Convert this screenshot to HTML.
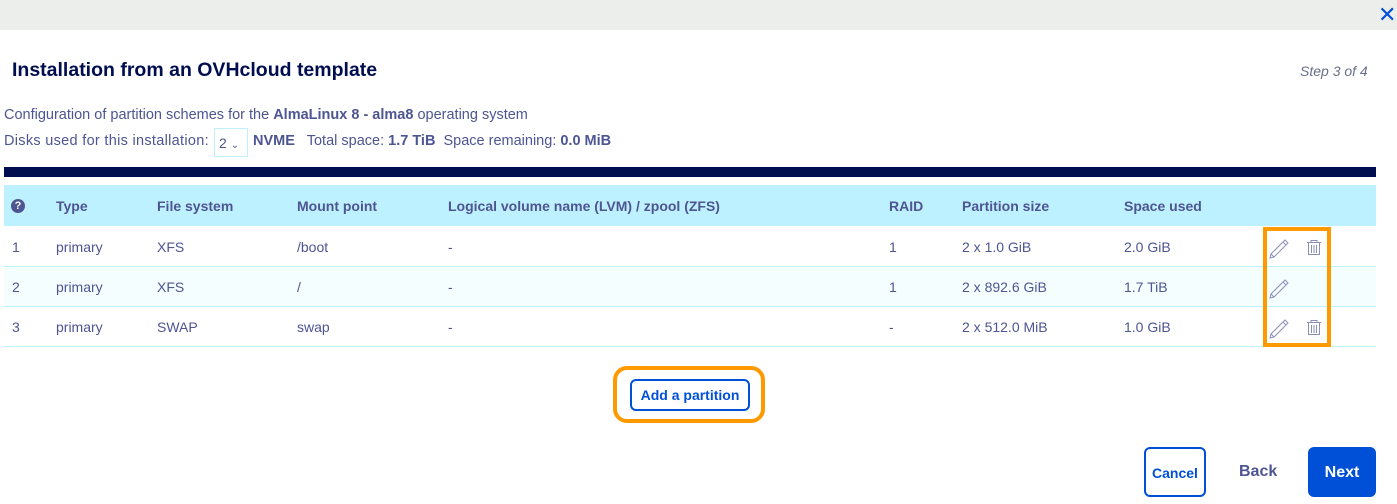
<html><head><style>
body{margin:0;width:1397px;height:504px;overflow:hidden;background:#fff;font-family:"Liberation Sans",sans-serif;color:#4d5592;position:relative}
.a{position:absolute;white-space:nowrap}
b{color:#4d5592}
.th{font-weight:bold;font-size:14px;color:#4d5592}
.td{font-size:14px}
</style></head><body>
<div class="a" style="left:0;top:0;width:1397px;height:30px;background:#eceeec"></div>
<div class="a" style="left:1378px;top:2px;font-size:22px;color:#0050d7">✕</div>
<div class="a" style="left:12px;top:59px;font-size:19.5px;font-weight:bold;color:#000e50">Installation from an OVHcloud template</div>
<div class="a" style="left:1300px;top:63px;font-size:14px;font-style:italic;color:#6a6f8a">Step 3 of 4</div>
<div class="a" style="left:4px;top:107px;font-size:14.5px">Configuration of partition schemes for the <b>AlmaLinux 8 - alma8</b> operating system</div>
<div class="a" style="left:4px;top:133px;font-size:14.5px;letter-spacing:0.3px">Disks used for this installation:</div>
<div class="a" style="left:214px;top:128px;width:34px;height:29px;border:1px solid #bef1ff;box-sizing:border-box;font-size:14px;padding:6px 0 0 4px">2 <span style="font-size:10px">⌄</span></div>
<div class="a" style="left:253px;top:133px;font-size:14.5px"><b>NVME</b>&nbsp;&nbsp; Total space: <b>1.7 TiB</b>&nbsp; Space remaining: <b>0.0 MiB</b></div>
<div class="a" style="left:4px;top:167px;width:1372px;height:10px;background:#000e50"></div>
<div class="a" style="left:4px;top:185px;width:1372px;height:41px;background:#bef1ff"></div>
<div class="a" style="left:4px;top:266px;width:1372px;height:40px;background:#f5feff"></div>
<div class="a" style="left:4px;top:266px;width:1372px;height:1px;background:#bef1ff"></div>
<div class="a" style="left:4px;top:306px;width:1372px;height:1px;background:#bef1ff"></div>
<div class="a" style="left:4px;top:346px;width:1372px;height:1px;background:#bef1ff"></div>
<div class="a" style="left:11px;top:199px;width:14px;height:14px;border-radius:50%;background:#4d5592;color:#fff;font-size:11px;font-weight:bold;text-align:center;line-height:14px">?</div>
<div class="a th" style="left:56px;top:198px">Type</div>
<div class="a th" style="left:157px;top:198px">File system</div>
<div class="a th" style="left:297px;top:198px">Mount point</div>
<div class="a th" style="left:448px;top:198px">Logical volume name (LVM) / zpool (ZFS)</div>
<div class="a th" style="left:889px;top:198px">RAID</div>
<div class="a th" style="left:962px;top:198px">Partition size</div>
<div class="a th" style="left:1124px;top:198px">Space used</div>

<div class="a td" style="left:12px;top:239px">1</div><div class="a td" style="left:56px;top:239px">primary</div><div class="a td" style="left:157px;top:239px">XFS</div><div class="a td" style="left:297px;top:239px">/boot</div><div class="a td" style="left:448px;top:239px">-</div><div class="a td" style="left:889px;top:239px">1</div><div class="a td" style="left:962px;top:239px">2 x 1.0 GiB</div><div class="a td" style="left:1124px;top:239px">2.0 GiB</div>
<div class="a td" style="left:12px;top:279px">2</div><div class="a td" style="left:56px;top:279px">primary</div><div class="a td" style="left:157px;top:279px">XFS</div><div class="a td" style="left:297px;top:279px">/</div><div class="a td" style="left:448px;top:279px">-</div><div class="a td" style="left:889px;top:279px">1</div><div class="a td" style="left:962px;top:279px">2 x 892.6 GiB</div><div class="a td" style="left:1124px;top:279px">1.7 TiB</div>
<div class="a td" style="left:12px;top:319px">3</div><div class="a td" style="left:56px;top:319px">primary</div><div class="a td" style="left:157px;top:319px">SWAP</div><div class="a td" style="left:297px;top:319px">swap</div><div class="a td" style="left:448px;top:319px">-</div><div class="a td" style="left:889px;top:319px">-</div><div class="a td" style="left:962px;top:319px">2 x 512.0 MiB</div><div class="a td" style="left:1124px;top:319px">1.0 GiB</div>

<div class="a" style="left:1263px;top:227px;width:68px;height:120px;border:4px solid #ff9900;box-sizing:border-box"></div>
<svg class="a" style="left:0;top:0" width="1397" height="504">
<g fill="none" stroke="#8a8fb8" stroke-width="1">
<path d="M1271 254 L1285 240 L1288 243 L1274 257 Z M1271 254 L1270 258 L1274 257 M1283 242 L1286 245"/>
<path d="M1271 294 L1285 280 L1288 283 L1274 297 Z M1271 294 L1270 298 L1274 297 M1283 282 L1286 285"/>
<path d="M1271 334 L1285 320 L1288 323 L1274 337 Z M1271 334 L1270 338 L1274 337 M1283 322 L1286 325"/>
<path d="M1307 242.5 H1321 M1311 242.5 V240.5 H1317 V242.5 M1308.5 243 V254.5 H1319.5 V243 M1311.5 245 V253 M1314 245 V253 M1316.5 245 V253"/>
<path d="M1307 322.5 H1321 M1311 322.5 V320.5 H1317 V322.5 M1308.5 323 V334.5 H1319.5 V323 M1311.5 325 V333 M1314 325 V333 M1316.5 325 V333"/>
</g></svg>
<div class="a" style="left:613px;top:366px;width:152px;height:57px;border:4px solid #ff9900;border-radius:14px;box-sizing:border-box"></div>
<div class="a" style="left:630px;top:379px;width:120px;height:32px;border:2px solid #0050d7;border-radius:6px;box-sizing:border-box;color:#0050d7;font-weight:bold;font-size:14px;text-align:center;line-height:29px">Add a partition</div>
<div class="a" style="left:1144px;top:447px;width:62px;height:50px;border:2px solid #0050d7;border-radius:6px;box-sizing:border-box;color:#0050d7;font-weight:bold;font-size:14px;text-align:center;line-height:48px">Cancel</div>
<div class="a" style="left:1239px;top:463px;font-weight:bold;font-size:16px;color:#4d5592">Back</div>
<div class="a" style="left:1308px;top:447px;width:68px;height:50px;background:#0050d7;border-radius:6px;color:#fff;font-weight:bold;font-size:16px;text-align:center;line-height:51px">Next</div>
</body></html>
